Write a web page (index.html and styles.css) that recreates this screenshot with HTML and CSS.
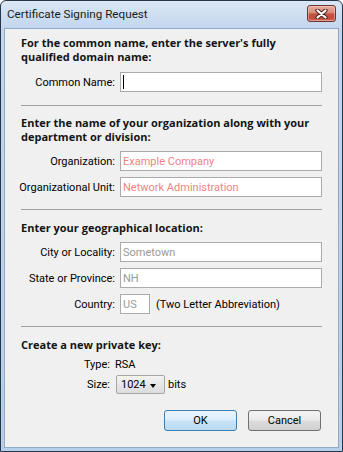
FILE: index.html
```html
<!DOCTYPE html>
<html lang="en">
<head>
    <meta charset="UTF-8">
    <title>Certificate Signing Request</title>
    <link rel="stylesheet" href="styles.css">
</head>
<body>
    <div class="window">
        <!-- Title bar -->
        <div class="titlebar">
            <span class="title">Certificate Signing Request</span>
            <button class="close-btn" aria-label="Close">
                <svg width="13" height="10" viewBox="0 0 13 10">
                    <path d="M2.5 1.5 L10.5 8.5 M10.5 1.5 L2.5 8.5" stroke="#4b2424" stroke-width="4.2" stroke-linecap="round" fill="none"/>
                    <path d="M2.5 1.5 L10.5 8.5 M10.5 1.5 L2.5 8.5" stroke="#ffffff" stroke-width="2.2" stroke-linecap="round" fill="none"/>
                </svg>
            </button>
        </div>

        <div class="client">
            <section class="group first">
                <h2>For the common name, enter the server's fully<br>qualified domain name:</h2>
                <div class="row">
                    <label>Common Name:</label>
                    <div class="field"><span class="caret"></span></div>
                </div>
            </section>

            <section class="group">
                <h2>Enter the name of your organization along with your<br>department or division:</h2>
                <div class="row">
                    <label>Organization:</label>
                    <div class="field hint-red">Example Company</div>
                </div>
                <div class="row">
                    <label>Organizational Unit:</label>
                    <div class="field hint-red">Network Administration</div>
                </div>
            </section>

            <section class="group">
                <h2>Enter your geographical location:</h2>
                <div class="row">
                    <label>City or Locality:</label>
                    <div class="field hint">Sometown</div>
                </div>
                <div class="row">
                    <label>State or Province:</label>
                    <div class="field hint">NH</div>
                </div>
                <div class="row">
                    <label>Country:</label>
                    <div class="field short hint">US</div>
                    <span class="note">(Two Letter Abbreviation)</span>
                </div>
            </section>

            <section class="group last">
                <h2>Create a new private key:</h2>
                <div class="key-row">
                    <label>Type:</label>
                    <span>RSA</span>
                </div>
                <div class="key-row size-row">
                    <label>Size:</label>
                    <div class="select"><span>1024</span><i class="arrow"></i></div>
                    <span class="unit">bits</span>
                </div>
                <div class="actions">
                    <button class="btn btn-default">OK</button>
                    <button class="btn">Cancel</button>
                </div>
            </section>
        </div>
    </div>
</body>
</html>
```

FILE: styles.css
```css
/* Global */
* {
    margin: 0;
    padding: 0;
    box-sizing: border-box;
}

body {
    width: 343px;
    height: 452px;
    background: #ffffff;
    font-family: Roboto, 'Liberation Sans', sans-serif;
    font-size: 11px;
    color: #000;
}

/* Window frame */
.window {
    width: 343px;
    height: 452px;
    border: 1px solid #26364a;
    border-radius: 6px 6px 0 0;
    padding: 0 3px 3px;
    background: linear-gradient(#dbe7f5 0, #c2d6ed 27px, #b6cfea 100%);
    display: flex;
    flex-direction: column;
}

.titlebar {
    height: 27px;
    display: flex;
    align-items: flex-start;
    justify-content: space-between;
}

.title {
    padding: 6px 0 0 3px;
    font-size: 11.7px;
    line-height: 15px;
    color: #1b1b1b;
}

.close-btn {
    width: 29px;
    height: 17px;
    margin: 4px 3px 0 0;
    border: 1px solid #6e3431;
    border-radius: 3px;
    background: linear-gradient(#e9ab9d 0%, #d98a7b 45%, #c85547 52%, #c24a3d 80%, #d46e5b 100%);
    box-shadow: inset 0 0 0 1px rgba(255, 220, 210, 0.45);
    display: flex;
    align-items: center;
    justify-content: center;
}

/* Client area */
.client {
    flex: 1;
    background-color: #f0f0f0;
    border: 1px solid #8fa9c7;
    padding: 7px 16px 0;
}

.group {
    border-bottom: 1px solid #a0a0a0;
    padding: 11px 0 12px;
}

.group.first {
    padding-top: 0;
    padding-bottom: 13px;
}

.group.first + .group {
    padding-top: 10px;
}

.group.last {
    border-bottom: none;
}

h2 {
    font-family: 'Open Sans', 'DejaVu Sans', sans-serif;
    font-size: 11px;
    font-weight: 700;
    line-height: 14px;
    color: #141414;
    white-space: nowrap;
}

/* Label + field rows */
.row {
    display: flex;
    align-items: center;
    margin-top: 6px;
}

h2 + .row {
    margin-top: 7px;
}

.group.first .row {
    margin-top: 8px;
}

.row label {
    flex: none;
    width: 94px;
    margin-right: 5px;
    display: flex;
    justify-content: flex-end;
    white-space: nowrap;
}

.field {
    flex: 1;
    height: 20px;
    background: #ffffff;
    border: 1px solid #ababab;
    padding-left: 2px;
    display: flex;
    align-items: center;
    white-space: nowrap;
}

.field.short {
    flex: none;
    width: 30px;
}

.hint {
    color: #999999;
}

.hint-red {
    color: #f08484;
}

.caret {
    width: 1px;
    height: 14px;
    background: #000;
}

.note {
    margin-left: 6px;
}

/* Private key rows */
.key-row {
    display: flex;
    align-items: center;
    margin-top: 6px;
    line-height: 14px;
}

.key-row label {
    width: 89px;
    margin-right: 5px;
    text-align: right;
}

.size-row {
    margin-top: 3px;
}

.select {
    width: 49px;
    height: 19px;
    margin-left: 1px;
    border: 1px solid #a6a6a6;
    border-radius: 2px;
    background: linear-gradient(#f4f4f4, #e6e6e6 50%, #dcdcdc);
    padding: 0 8px 0 4px;
    display: flex;
    align-items: center;
    justify-content: space-between;
}

.arrow {
    width: 0;
    height: 0;
    margin-top: 2px;
    border-left: 3.5px solid transparent;
    border-right: 3.5px solid transparent;
    border-top: 4px solid #000;
}

.unit {
    margin-left: 3px;
}

/* Buttons */
.actions {
    display: flex;
    justify-content: flex-end;
    gap: 11px;
    margin-top: 16px;
    padding-right: 1px;
}

.btn {
    width: 73px;
    height: 21px;
    border: 1px solid #707070;
    border-radius: 3px;
    background: linear-gradient(#f3f3f3 0%, #ebebeb 48%, #dddddd 52%, #cfcfcf 100%);
    font-family: Roboto, 'Liberation Sans', sans-serif;
    font-size: 11px;
    color: #000;
}

.btn-default {
    border-color: #3c7fb1;
    background: linear-gradient(#eaf5fd 0%, #dcedfa 48%, #c8e3f6 52%, #b9dbf3 100%);
}
```
